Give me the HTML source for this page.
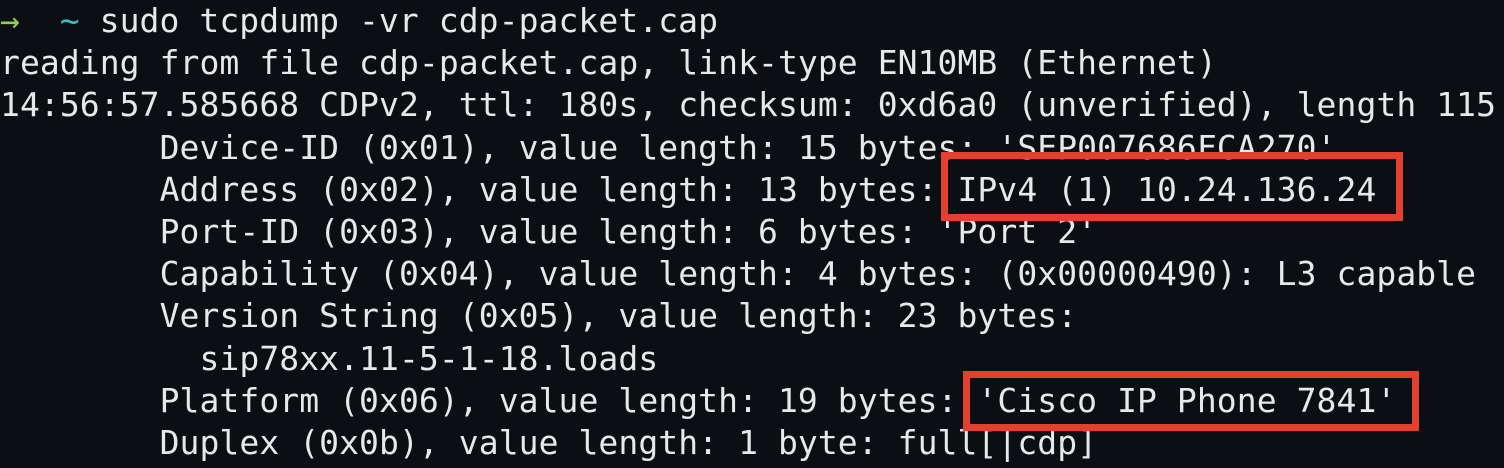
<!DOCTYPE html>
<html><head><meta charset="utf-8"><style>
html,body{margin:0;padding:0;background:#0b0f14;width:1504px;height:468px;overflow:hidden}
pre{margin:0;padding:0;font-family:"DejaVu Sans Mono","Liberation Mono",monospace;font-size:33px;letter-spacing:0.08px;line-height:42.2px;color:#e8e8e8;white-space:pre}
.g{color:#8fd14f;display:inline-block;width:1ch}
.c{color:#3fbfbf}
.box{position:absolute;border:7px solid #e5402f;box-sizing:border-box}
</style></head><body>
<pre><span class="g">→</span>  <span class="c">~</span> sudo tcpdump -vr cdp-packet.cap
reading from file cdp-packet.cap, link-type EN10MB (Ethernet)
14:56:57.585668 CDPv2, ttl: 180s, checksum: 0xd6a0 (unverified), length 115
        Device-ID (0x01), value length: 15 bytes: 'SEP007686FCA270'
        Address (0x02), value length: 13 bytes: IPv4 (1) 10.24.136.24
        Port-ID (0x03), value length: 6 bytes: 'Port 2'
        Capability (0x04), value length: 4 bytes: (0x00000490): L3 capable
        Version String (0x05), value length: 23 bytes:
          sip78xx.11-5-1-18.loads
        Platform (0x06), value length: 19 bytes: 'Cisco IP Phone 7841'
        Duplex (0x0b), value length: 1 byte: full[|cdp]</pre>
<div class="box" style="left:941px;top:152px;width:462px;height:69px"></div>
<div class="box" style="left:963px;top:371px;width:456px;height:60px"></div>
</body></html>
